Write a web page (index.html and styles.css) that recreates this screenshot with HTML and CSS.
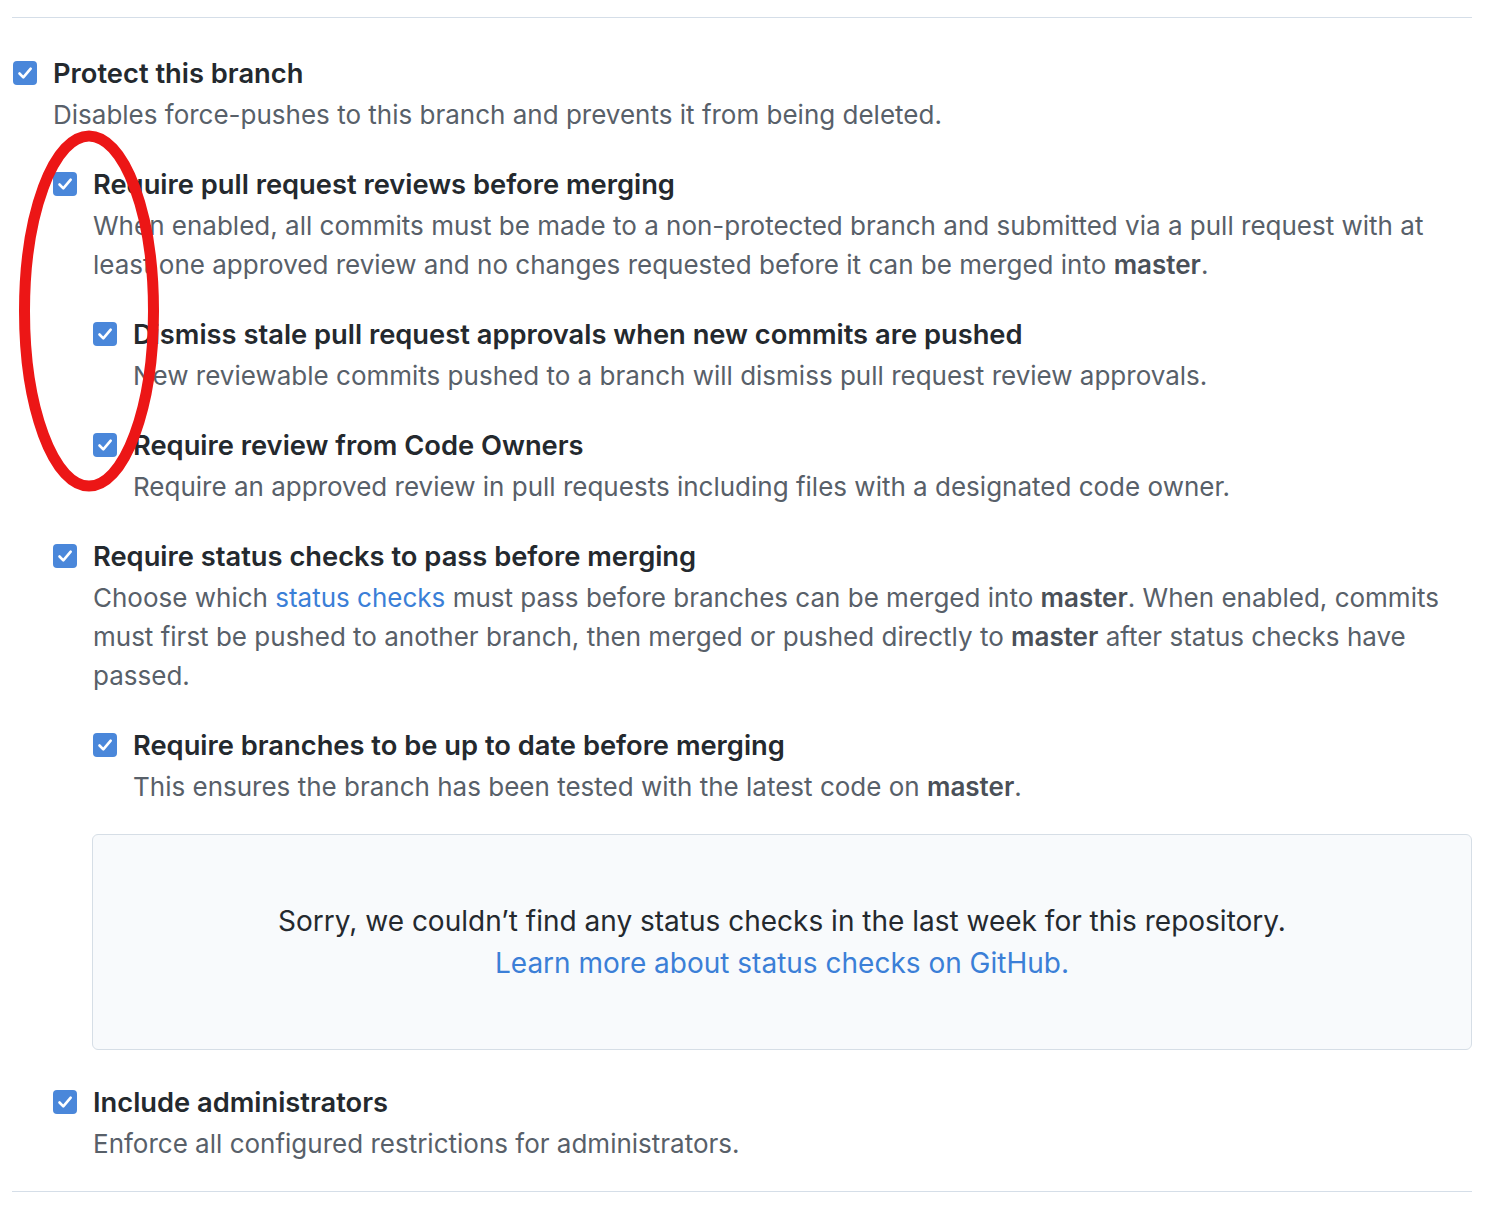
FILE: index.html
```html
<!DOCTYPE html>
<html lang="en">
<head>
<meta charset="utf-8">
<title>Branch protection</title>
<link rel="stylesheet" href="styles.css">
</head>
<body>
<div class="page">
  <div class="rule"></div>

  <div class="option top">
    <span class="cb"><svg viewBox="0 0 24 24" width="24" height="24"><path d="M6.5 12.5l3.8 3.8 7.4-8.6" fill="none" stroke="#fff" stroke-width="2.6" stroke-linecap="round" stroke-linejoin="round"/></svg></span>
    <div class="body">
      <div class="title">Protect this branch</div>
      <p class="note">Disables force-pushes to this branch and prevents it from being deleted.</p>

      <div class="option">
        <span class="cb"><svg viewBox="0 0 24 24" width="24" height="24"><path d="M6.5 12.5l3.8 3.8 7.4-8.6" fill="none" stroke="#fff" stroke-width="2.6" stroke-linecap="round" stroke-linejoin="round"/></svg></span>
        <div class="body">
          <div class="title">Require pull request reviews before merging</div>
          <p class="note">When enabled, all commits must be made to a non-protected branch and submitted via a pull request with at<br>least one approved review and no changes requested before it can be merged into <strong>master</strong>.</p>

          <div class="option">
            <span class="cb"><svg viewBox="0 0 24 24" width="24" height="24"><path d="M6.5 12.5l3.8 3.8 7.4-8.6" fill="none" stroke="#fff" stroke-width="2.6" stroke-linecap="round" stroke-linejoin="round"/></svg></span>
            <div class="body">
              <div class="title">Dismiss stale pull request approvals when new commits are pushed</div>
              <p class="note">New reviewable commits pushed to a branch will dismiss pull request review approvals.</p>
            </div>
          </div>

          <div class="option">
            <span class="cb"><svg viewBox="0 0 24 24" width="24" height="24"><path d="M6.5 12.5l3.8 3.8 7.4-8.6" fill="none" stroke="#fff" stroke-width="2.6" stroke-linecap="round" stroke-linejoin="round"/></svg></span>
            <div class="body">
              <div class="title">Require review from Code Owners</div>
              <p class="note">Require an approved review in pull requests including files with a designated code owner.</p>
            </div>
          </div>
        </div>
      </div>

      <div class="option">
        <span class="cb"><svg viewBox="0 0 24 24" width="24" height="24"><path d="M6.5 12.5l3.8 3.8 7.4-8.6" fill="none" stroke="#fff" stroke-width="2.6" stroke-linecap="round" stroke-linejoin="round"/></svg></span>
        <div class="body">
          <div class="title">Require status checks to pass before merging</div>
          <p class="note">Choose which <a href="#" class="link">status checks</a> must pass before branches can be merged into <strong>master</strong>. When enabled, commits<br>must first be pushed to another branch, then merged or pushed directly to <strong>master</strong> after status checks have<br>passed.</p>

          <div class="option">
            <span class="cb"><svg viewBox="0 0 24 24" width="24" height="24"><path d="M6.5 12.5l3.8 3.8 7.4-8.6" fill="none" stroke="#fff" stroke-width="2.6" stroke-linecap="round" stroke-linejoin="round"/></svg></span>
            <div class="body">
              <div class="title">Require branches to be up to date before merging</div>
              <p class="note">This ensures the branch has been tested with the latest code on <strong>master</strong>.</p>
            </div>
          </div>

          <div class="blankslate">
            <p class="bs-text">Sorry, we couldn’t find any status checks in the last week for this repository.</p>
            <p class="bs-text"><a href="#" class="link">Learn more about status checks on GitHub.</a></p>
          </div>
        </div>
      </div>

      <div class="option">
        <span class="cb"><svg viewBox="0 0 24 24" width="24" height="24"><path d="M6.5 12.5l3.8 3.8 7.4-8.6" fill="none" stroke="#fff" stroke-width="2.6" stroke-linecap="round" stroke-linejoin="round"/></svg></span>
        <div class="body">
          <div class="title">Include administrators</div>
          <p class="note">Enforce all configured restrictions for administrators.</p>
        </div>
      </div>
    </div>
  </div>

  <div class="rule"></div>

  <svg class="annotation" width="140" height="362" viewBox="0 0 140 362">
    <ellipse cx="70" cy="181" rx="64.5" ry="175" fill="none" stroke="#ec1616" stroke-width="11"/>
  </svg>
</div>
</body>
</html>
```

FILE: styles.css
```css
html, body {
  margin: 0;
  padding: 0;
  background: #ffffff;
}

body {
  font-family: "Inter", "Liberation Sans", sans-serif;
  color: #24292e;
}

.page {
  position: relative;
  width: 1460px;
  margin-left: 12px;
  padding-top: 17px;
}

.rule {
  height: 1px;
  background: #d5dee8;
}

.option {
  display: grid;
  grid-template-columns: 24px 1fr;
  column-gap: 16px;
  margin-top: 29px;
}

.option.top {
  margin-top: 34px;
  margin-bottom: 28px;
  padding-left: 1px;
}

.cb {
  display: block;
  width: 24px;
  height: 24px;
  margin-top: 9px;
  border-radius: 4px;
  background: #4a87da;
}

.cb svg {
  display: block;
}

.body {
  min-width: 0;
}

.title {
  font-size: 27.3px;
  font-weight: 600;
  line-height: 43px;
  color: #24292e;
  white-space: nowrap;
}

.note {
  margin: 0;
  font-size: 26px;
  line-height: 39px;
  color: #586069;
  white-space: nowrap;
}

.note strong {
  font-weight: 600;
  color: #4a5058;
}

.link {
  color: #3b7fd7;
  text-decoration: none;
}

.blankslate {
  margin-top: 28px;
  margin-bottom: 2px;
  margin-left: -1px;
  padding: 65px 20px;
  border: 1px solid #d6dee6;
  border-radius: 6px;
  background: #f8fafc;
  text-align: center;
}

.bs-text {
  margin: 0;
  font-size: 28px;
  line-height: 42px;
  color: #24292e;
}

.annotation {
  position: absolute;
  left: 7px;
  top: 130px;
}
```
